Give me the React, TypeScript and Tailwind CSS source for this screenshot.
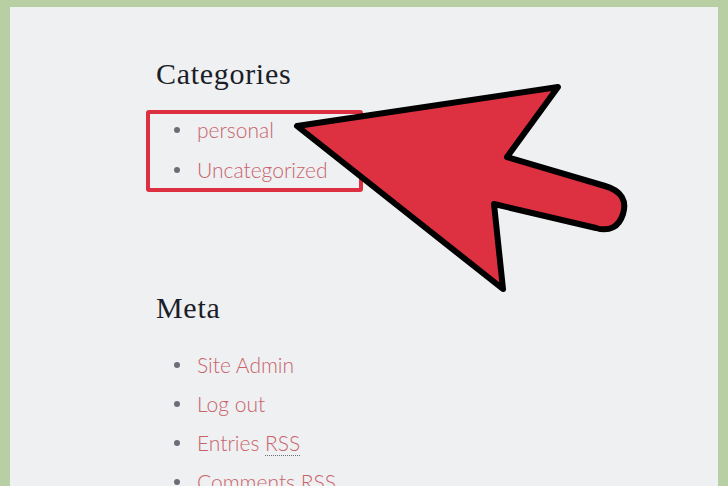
import React from "react";

const serif = { fontFamily: '"Liberation Serif", "Times New Roman", serif' };
const sans = { fontFamily: 'Lato, "Liberation Sans", sans-serif' };

function Item({ children }: { children: React.ReactNode }) {
  return (
    <li className="flex items-center h-[32px]">
      <span className="w-[6px] h-[6px] rounded-full bg-[#6b6e77] shrink-0" />
      <span className="ml-[17px] text-[21px] leading-[32px] text-[#c8636a] font-light" style={sans}>
        {children}
      </span>
    </li>
  );
}

export default function App() {
  return (
    <div className="relative w-[728px] h-[486px] bg-[#b8cfa3] pl-[10px] pr-[10px] pt-[7px] overflow-hidden">
      <div className="h-full bg-[#eff0f2] pl-[136px] pt-[49px]">
        <h2 className="ml-[10px] text-[30px] leading-[36px] text-[#1b1e28] tracking-[0.7px]" style={serif}>
          Categories
        </h2>
        <div className="mt-[18px] w-[217px] border-[4px] border-[#dc3042] rounded-[3px] pl-[24px] pb-[2px]">
          <ul className="flex flex-col gap-[8px]">
            <Item>personal</Item>
            <Item>Uncategorized</Item>
          </ul>
        </div>
        <h2 className="mt-[98px] ml-[10px] text-[30px] leading-[36px] text-[#1b1e28] tracking-[0.7px]" style={serif}>
          Meta
        </h2>
        <ul className="mt-[23px] pl-[28px] flex flex-col gap-[7px]">
          <Item>Site Admin</Item>
          <Item>Log out</Item>
          <Item>
            Entries{" "}
            <span className="border-b border-dotted border-[#6b6e77]">RSS</span>
          </Item>
          <Item>Comments RSS</Item>
        </ul>
      </div>
      <svg className="absolute inset-0 pointer-events-none" width="728" height="486" viewBox="0 0 728 486">
        <path
          d="M 297 126 L 558 87 L 507 157 L 605 186 C 622 191 627 201 623 214 C 619 227 609 232 596 228 L 494 204 L 503 289 Z"
          fill="#dd3142"
          stroke="#000"
          strokeWidth="6"
          strokeLinejoin="round"
        />
      </svg>
    </div>
  );
}
